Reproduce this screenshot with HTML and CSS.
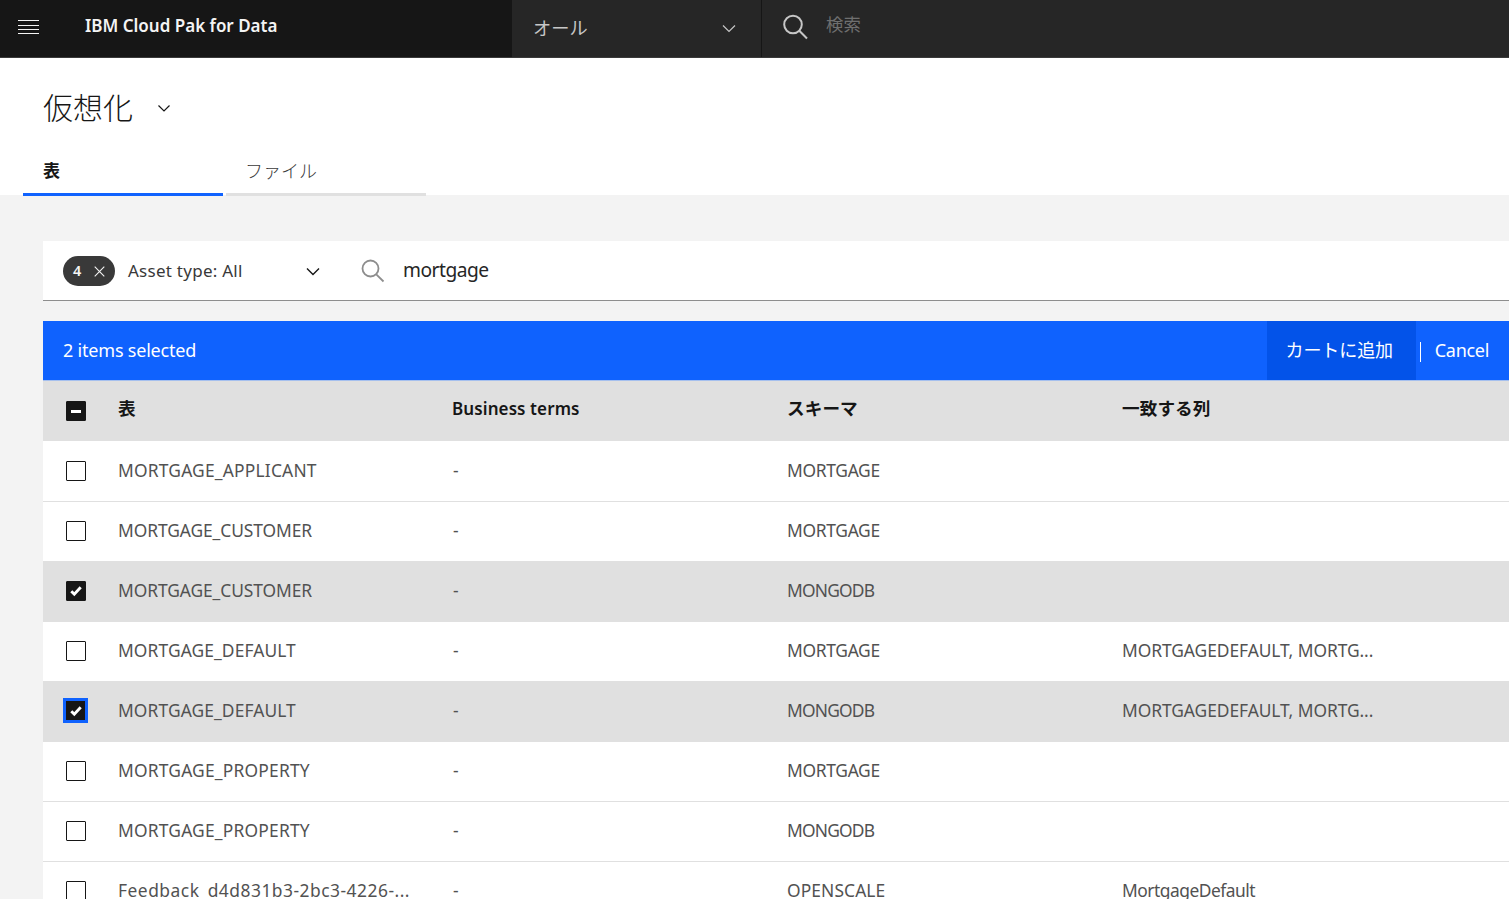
FILE: index.html
```html
<!DOCTYPE html>
<html lang="ja">
<head>
<meta charset="utf-8">
<title>仮想化</title>
<link rel="stylesheet" href="styles.css">
</head>
<body>
<header class="topbar">
  <div class="brand">
    <svg class="menu-icon" width="22" height="16" viewBox="0 0 22 16"><path d="M0 1.5h21M0 6.5h21M0 10.5h21M0 14.5h21" stroke="#f4f4f4" stroke-width="1.1" fill="none"/></svg>
    <span class="brand-name">IBM Cloud Pak for Data</span>
  </div>
  <div class="scope">
    <span class="scope-label">オール</span>
    <svg width="14" height="9" viewBox="0 0 14 9"><path d="M1 1.5l6 6 6-6" stroke="#c6c6c6" stroke-width="1.2" fill="none"/></svg>
  </div>
  <div class="global-search">
    <svg width="26" height="26" viewBox="0 0 26 26"><circle cx="10" cy="10.5" r="8.8" stroke="#c6c6c6" stroke-width="2" fill="none"/><path d="M16.3 16.8l7.7 7.7" stroke="#c6c6c6" stroke-width="2" fill="none"/></svg>
    <span class="placeholder">検索</span>
  </div>
</header>
<section class="page-head">
  <div class="title-row">
    <h1>仮想化</h1>
    <svg width="14" height="9" viewBox="0 0 14 9"><path d="M1.5 1.5l5.5 5.5 5.5-5.5" stroke="#161616" stroke-width="1.2" fill="none"/></svg>
  </div>
  <nav class="tabs">
    <div class="tab tab-active">表</div>
    <div class="tab">ファイル</div>
  </nav>
</section>
<main class="content">
  <div class="filters">
    <div class="tag"><span class="tag-count">4</span><svg width="11" height="11" viewBox="0 0 11 11"><path d="M.7.7l9.6 9.6M10.3.7L.7 10.3" stroke="#f4f4f4" stroke-width="1.1"/></svg></div>
    <span class="asset">Asset type: All</span>
    <svg class="asset-chev" width="14" height="9" viewBox="0 0 14 9"><path d="M1 1.5l6 6 6-6" stroke="#161616" stroke-width="1.4" fill="none"/></svg>
    <svg class="filter-search" width="24" height="24" viewBox="0 0 24 24"><circle cx="9.5" cy="9.5" r="8" stroke="#8d8d8d" stroke-width="1.8" fill="none"/><path d="M15.3 15.3l7.2 7.2" stroke="#8d8d8d" stroke-width="1.8" fill="none"/></svg>
    <span class="query">mortgage</span>
  </div>
  <div class="batch">
    <span class="batch-count">2 items selected</span>
    <button class="batch-add">カートに追加</button>
    <span class="batch-sep"></span>
    <button class="batch-cancel">Cancel</button>
  </div>
  <div class="table">
    <div class="row head">
      <div class="cb-cell"><span class="cb cb-on"><i class="dash"></i></span></div>
      <div class="jp">表</div><div>Business terms</div><div class="jp">スキーマ</div><div class="jp">一致する列</div>
    </div>
    <div class="row first">
      <div class="cb-cell"><span class="cb"></span></div>
      <div class="wide">MORTGAGE_APPLICANT</div><div class="none">-</div><div class="schema">MORTGAGE</div><div></div>
    </div>
    <div class="row">
      <div class="cb-cell"><span class="cb"></span></div>
      <div class="snug">MORTGAGE_CUSTOMER</div><div class="none">-</div><div class="schema">MORTGAGE</div><div></div>
    </div>
    <div class="row selected">
      <div class="cb-cell"><span class="cb cb-on"><svg width="14" height="12" viewBox="0 0 14 12"><path d="M2.3 6.2l3 3L11.7 2.3" stroke="#fff" stroke-width="2.9" fill="none"/></svg></span></div>
      <div class="snug">MORTGAGE_CUSTOMER</div><div class="none">-</div><div class="mongo">MONGODB</div><div></div>
    </div>
    <div class="row">
      <div class="cb-cell"><span class="cb"></span></div>
      <div>MORTGAGE_DEFAULT</div><div class="none">-</div><div class="schema">MORTGAGE</div><div class="snug-long">MORTGAGEDEFAULT, MORTG...</div>
    </div>
    <div class="row selected">
      <div class="cb-cell"><span class="cb cb-on cb-focus"><svg width="14" height="12" viewBox="0 0 14 12"><path d="M2.3 6.2l3 3L11.7 2.3" stroke="#fff" stroke-width="2.9" fill="none"/></svg></span></div>
      <div>MORTGAGE_DEFAULT</div><div class="none">-</div><div class="mongo">MONGODB</div><div class="snug-long">MORTGAGEDEFAULT, MORTG...</div>
    </div>
    <div class="row">
      <div class="cb-cell"><span class="cb"></span></div>
      <div class="wide">MORTGAGE_PROPERTY</div><div class="none">-</div><div class="schema">MORTGAGE</div><div></div>
    </div>
    <div class="row">
      <div class="cb-cell"><span class="cb"></span></div>
      <div class="wide">MORTGAGE_PROPERTY</div><div class="none">-</div><div class="mongo">MONGODB</div><div></div>
    </div>
    <div class="row">
      <div class="cb-cell"><span class="cb"></span></div>
      <div class="digits">Feedback_d4d831b3-2bc3-4226-...</div><div class="none">-</div><div>OPENSCALE</div><div class="lower">MortgageDefault</div>
    </div>
  </div>
</main>
</body>
</html>
```
FILE: styles.css
```css
* { box-sizing: border-box; }
html, body { margin: 0; height: 899px; overflow: hidden; }
body {
  font-family: "Noto Sans", "Noto Sans CJK JP", sans-serif;
  background: #f3f3f3;
  color: #161616;
}
.topbar {
  display: flex;
  height: 58px;
  background: #262626;
  border-bottom: 1px solid #3a3a3a;
}
.brand {
  width: 512px;
  display: flex;
  align-items: center;
  gap: 45px;
  padding: 0 0 3px 18px;
  background: #161616;
  color: #f4f4f4;
}
.menu-icon { flex: none; }
.brand-name { font-size: 17px; font-weight: 600; padding-bottom: 4px; }
.scope {
  width: 250px;
  display: flex;
  align-items: center;
  justify-content: space-between;
  padding: 0 25px 0 21px;
  border-right: 1px solid #161616;
  color: #c6c6c6;
  font-size: 18.2px;
}
.scope-label { padding-bottom: 4px; }
.global-search {
  display: flex;
  align-items: center;
  gap: 17px;
  padding-left: 21px;
  padding-bottom: 3px;
}
.placeholder { color: #6f6f6f; font-size: 17.4px; padding-bottom: 8px; }
.page-head {
  height: 137px;
  background: #fff;
  padding-left: 23px;
  display: flex;
  flex-direction: column;
}
.title-row {
  display: flex;
  align-items: center;
  gap: 24px;
  height: 100px;
  padding-left: 20px;
}
.title-row h1 { margin: 0; font-size: 30px; font-weight: 300; line-height: 100px; }
.tabs { display: flex; gap: 3px; }
.tab {
  width: 200px;
  height: 38px;
  padding-left: 19px;
  border-bottom: 3px solid #e0e0e0;
  color: #393939;
  font-size: 18px;
  line-height: 26px;
  font-weight: 300;
}
.tab-active { padding-left: 20px; font-weight: 600; font-size: 17px; color: #161616; border-bottom-color: #0f62fe; }
.content { padding: 46px 0 0 43px; }
.filters {
  display: flex;
  align-items: center;
  height: 60px;
  background: #fff;
  border-bottom: 1px solid #8d8d8d;
  padding: 0 20px;
}
.tag {
  width: 52px;
  height: 30px;
  margin-top: 1px;
  display: flex;
  align-items: center;
  gap: 13px;
  padding-left: 10px;
  border-radius: 15px;
  background: #393939;
  color: #f4f4f4;
  font-size: 14.5px;
  font-weight: 600;
}
.tag-count { padding-bottom: 2px; }
.asset { margin-left: 13px; width: 178px; font-size: 17px; color: #393939; letter-spacing: .26px; }
.asset-chev { flex: none; margin-top: 1px; }
.filter-search { flex: none; margin: 1px 0 0 41px; }
.query { margin-left: 18px; padding-bottom: 2px; font-size: 19.2px; letter-spacing: -.5px; color: #262626; }
.batch {
  display: flex;
  align-items: center;
  height: 60px;
  margin-top: 20px;
  border-bottom: 1px solid #a6c0ee;
  background: #0f62fe;
  color: #fff;
  font-size: 18px;
  padding-left: 20px;
}
.batch-count { flex: 1; padding-bottom: 2px; letter-spacing: -.2px; }
.batch-add, .batch-cancel {
  border: 0;
  height: 100%;
  background: #0353e9;
  color: #fff;
  font: inherit;
  padding: 0 4px 3px 0;
}
.batch-add { width: 149px; letter-spacing: -.1px; }
.batch-sep { width: 1px; height: 20px; margin: 3px 0 0 4px; background: #fff; }
.batch-cancel { background: transparent; padding: 0 20px 1px 14px; letter-spacing: -.3px; }
.row {
  display: grid;
  grid-template-columns: 75px 334px 335px 335px 1fr;
  align-items: center;
  height: 60px;
  padding-bottom: 3px;
  background: #fff;
  border-top: 1px solid #e0e0e0;
  color: #525252;
  font-size: 17.4px;
  letter-spacing: .1px;
  white-space: nowrap;
}
.row.first { border-top-color: #fff; }
.row.head {
  background: #e0e0e0;
  border-top: 0;
  color: #161616;
  font-weight: 600;
  font-size: 17px;
  padding-bottom: 5px;
}
.row.selected { background: #e0e0e0; }
.row.head .jp { font-size: 17.6px; padding-bottom: 2px; }
.none { padding-left: 1px; }
.wide { letter-spacing: .2px; }
.snug { letter-spacing: -.08px; }
.snug-long { letter-spacing: -.06px; }
.digits { letter-spacing: .5px; }
.lower { letter-spacing: -.5px; }
.schema { letter-spacing: -.3px; }
.mongo { letter-spacing: -.8px; }
.cb-cell { display: flex; padding: 1px 0 0 23px; }
.row.head .cb-cell { padding-top: 5px; }
.cb {
  width: 20px;
  height: 20px;
  display: flex;
  align-items: center;
  justify-content: center;
  border: 1px solid #161616;
  border-radius: 1px;
  background: #fff;
}
.cb-on { background: #161616; }
.cb-focus {
  width: 25px;
  height: 25px;
  margin: 0 0 0 -3px;
  border: 3px solid #0f62fe;
  border-radius: 0;
}
.dash { display: block; width: 10px; height: 3px; background: #fff; }
```
